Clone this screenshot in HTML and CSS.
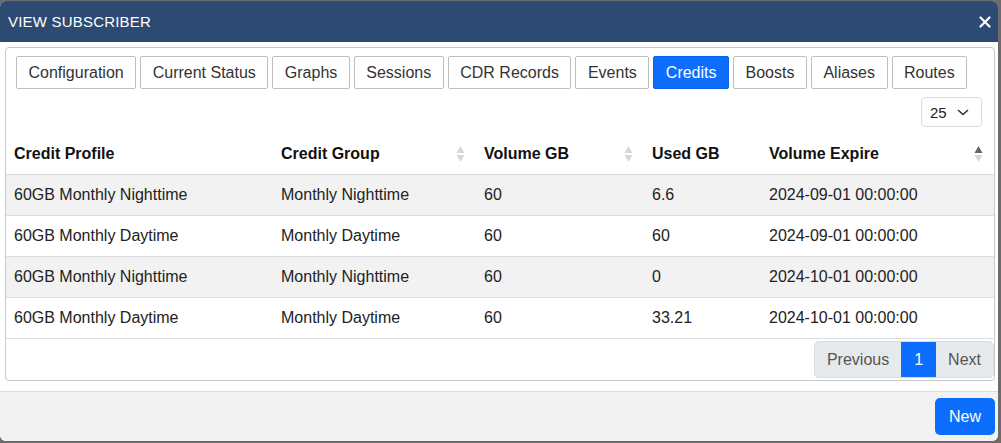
FILE: index.html
```html
<!DOCTYPE html>
<html>
<head>
<meta charset="utf-8">
<link rel="stylesheet" href="styles.css">
</head>
<body>
<div class="modal">
  <div class="modal-header">
    <span class="modal-title">VIEW SUBSCRIBER</span>
    <svg class="close" width="12" height="12" viewBox="0 0 12 12"><path d="M1.5 1.5 L10.5 10.5 M10.5 1.5 L1.5 10.5" stroke="#fff" stroke-width="2.2" stroke-linecap="round"/></svg>
  </div>
  <div class="modal-body">
    <div class="panel">
      <div class="tabs">
        <span class="tab">Configuration</span>
        <span class="tab">Current Status</span>
        <span class="tab">Graphs</span>
        <span class="tab">Sessions</span>
        <span class="tab">CDR Records</span>
        <span class="tab">Events</span>
        <span class="tab active">Credits</span>
        <span class="tab">Boosts</span>
        <span class="tab">Aliases</span>
        <span class="tab">Routes</span>
      </div>
      <div class="toolbar">
        <div class="select"><span>25</span><svg width="12" height="7" viewBox="0 0 12 7"><path d="M1 1 L6 5.5 L11 1" fill="none" stroke="#333" stroke-width="1.6"/></svg></div>
      </div>
      <table class="grid">
        <colgroup><col class="c1"><col class="c2"><col class="c3"><col class="c4"><col class="c5"></colgroup>
        <thead>
          <tr>
            <th><div class="hcell"><span>Credit Profile</span></div></th>
            <th><div class="hcell"><span>Credit Group</span><svg class="sort" width="9" height="18" viewBox="0 0 9 18"><polygon points="4.5,1 8.5,8 0.5,8" fill="#d6d6d6"/><polygon points="0.5,10 8.5,10 4.5,17" fill="#d6d6d6"/></svg></div></th>
            <th><div class="hcell"><span>Volume GB</span><svg class="sort" width="9" height="18" viewBox="0 0 9 18"><polygon points="4.5,1 8.5,8 0.5,8" fill="#d6d6d6"/><polygon points="0.5,10 8.5,10 4.5,17" fill="#d6d6d6"/></svg></div></th>
            <th><div class="hcell"><span>Used GB</span></div></th>
            <th><div class="hcell"><span>Volume Expire</span><svg class="sort" width="9" height="18" viewBox="0 0 9 18"><polygon points="4.5,1 8.5,8 0.5,8" fill="#666"/><polygon points="0.5,10 8.5,10 4.5,17" fill="#d6d6d6"/></svg></div></th>
          </tr>
        </thead>
        <tbody>
          <tr class="odd"><td>60GB Monthly Nighttime</td><td>Monthly Nighttime</td><td>60</td><td>6.6</td><td>2024-09-01 00:00:00</td></tr>
          <tr><td>60GB Monthly Daytime</td><td>Monthly Daytime</td><td>60</td><td>60</td><td>2024-09-01 00:00:00</td></tr>
          <tr class="odd"><td>60GB Monthly Nighttime</td><td>Monthly Nighttime</td><td>60</td><td>0</td><td>2024-10-01 00:00:00</td></tr>
          <tr><td>60GB Monthly Daytime</td><td>Monthly Daytime</td><td>60</td><td>33.21</td><td>2024-10-01 00:00:00</td></tr>
        </tbody>
      </table>
      <div class="pager-row">
        <div class="pager">
          <span class="pg">Previous</span>
          <span class="pg num">1</span>
          <span class="pg">Next</span>
        </div>
      </div>
    </div>
  </div>
  <div class="modal-footer">
    <span class="btn-new">New</span>
  </div>
</div>
</body>
</html>
```

FILE: styles.css
```css
* { box-sizing: border-box; }
body {
  margin: 0;
  background: #6c6c6c;
  font-family: "Liberation Sans", Arial, sans-serif;
  font-size: 16px;
  color: #222;
}
.modal {
  width: 998px;
  height: 440px;
  margin-top: 1px;
  background: #fff;
  border-radius: 6px;
  overflow: hidden;
  display: flex;
  flex-direction: column;
}
.modal-header {
  height: 41px;
  flex: none;
  background: #2d4a72;
  color: #fff;
  display: flex;
  align-items: center;
  justify-content: space-between;
  padding: 0 7px 0 8px;
}
.modal-title { font-size: 15px; letter-spacing: 0.2px; }
.close { display: block; }
.modal-body {
  flex: 1;
  display: flex;
  padding: 5px 3px 10px 5px;
}
.panel {
  flex: 1;
  border: 1px solid #c8c8c8;
  border-radius: 4px;
  display: flex;
  flex-direction: column;
}
.tabs {
  display: flex;
  gap: 4px;
  padding: 8px 10px 0 10px;
}
.tab {
  height: 33px;
  line-height: 31px;
  padding: 0 11.5px;
  border: 1px solid #bfbfbf;
  border-radius: 2px;
  background: #fff;
  color: #333;
  white-space: nowrap;
}
.tab.active {
  background: #0d6efd;
  border-color: #0b63e5;
  color: #fff;
}
.toolbar {
  display: flex;
  justify-content: flex-end;
  padding: 8px 12px 0 0;
}
.select {
  width: 61px;
  height: 30px;
  border: 1px solid #dcdcdc;
  border-radius: 4px;
  display: flex;
  align-items: center;
  justify-content: space-between;
  padding: 0 12px 0 8px;
  font-size: 15px;
  color: #222;
}
.select svg { display: block; }
.grid {
  width: 100%;
  margin-top: 7px;
  border-collapse: collapse;
  table-layout: fixed;
}
.c1 { width: 267px; }
.c2 { width: 203px; }
.c3 { width: 168px; }
.c4 { width: 117px; }
.grid th {
  text-align: left;
  font-weight: bold;
  color: #111;
  padding: 10px 8px;
  line-height: 20px;
  border-bottom: 1px solid #d9d9d9;
}
.hcell {
  display: flex;
  align-items: center;
  justify-content: space-between;
}
.sort { display: block; margin-right: 3px; }
.grid td {
  padding: 10px 8px;
  line-height: 20px;
  border-bottom: 1px solid #dedede;
  white-space: nowrap;
}
.grid tr.odd td { background: #f2f2f2; }
.pager-row {
  display: flex;
  justify-content: flex-end;
  margin-top: 2px;
}
.pager {
  display: flex;
  height: 37px;
  border: 1px solid #dadde0;
  border-radius: 5px;
  background: #e7eaed;
  overflow: hidden;
}
.pg {
  line-height: 35px;
  padding: 0 12px;
  color: #555;
}
.pg.num {
  background: #0d6efd;
  color: #fff;
  padding: 0 13px;
}
.modal-footer {
  flex: none;
  height: 50px;
  border-top: 1px solid #dcdcdc;
  background: #f2f2f2;
  display: flex;
  justify-content: flex-end;
  align-items: flex-start;
  padding: 6px 3px 0 0;
}
.btn-new {
  height: 37px;
  line-height: 37px;
  padding: 0 14px;
  background: #0d6efd;
  color: #fff;
  border-radius: 5px;
}
```
